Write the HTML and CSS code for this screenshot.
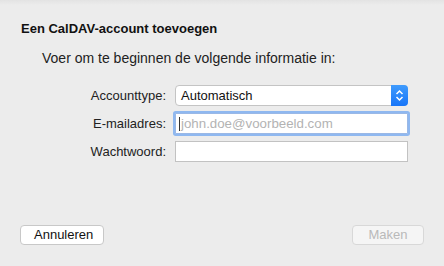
FILE: index.html
```html
<!DOCTYPE html>
<html>
<head>
<meta charset="utf-8">
<link rel="stylesheet" href="styles.css">
</head>
<body>
<div class="sheet">
  <div class="title">Een CalDAV-account toevoegen</div>
  <div class="intro">Voer om te beginnen de volgende informatie in:</div>
  <div class="form">
    <div class="label">Accounttype:</div>
    <div class="select">
      <span class="select-text">Automatisch</span>
      <span class="stepper">
        <svg width="9" height="13" viewBox="0 0 9 13"><path d="M1.5 5 L4.5 2 L7.5 5 M1.5 8 L4.5 11 L7.5 8" fill="none" stroke="#fff" stroke-width="1.5"/></svg>
      </span>
    </div>
    <div class="label">E-mailadres:</div>
    <div class="input focus"><span class="caret"></span><span class="placeholder">john.doe@voorbeeld.com</span></div>
    <div class="label">Wachtwoord:</div>
    <div class="input"></div>
  </div>
  <div class="footer">
    <button class="btn">Annuleren</button>
    <button class="btn disabled">Maken</button>
  </div>
</div>
</body>
</html>
```
FILE: styles.css
```css
html, body {
  margin: 0;
  padding: 0;
}
body {
  width: 444px;
  height: 266px;
  background: linear-gradient(#e3e3e3 0px, #ececec 5px, #ececec 100%);
  font-family: "Liberation Sans", Arial, sans-serif;
  font-size: 13px;
  color: #1a1a1a;
  overflow: hidden;
}
.sheet {
  padding: 21px 20px 0 20px;
  display: flex;
  flex-direction: column;
  height: 245px;
  box-sizing: border-box;
}
.title {
  font-weight: bold;
  line-height: 16px;
  padding-left: 1px;
  color: #111;
}
.intro {
  margin-top: 13px;
  margin-left: 22px;
  font-size: 14px;
  line-height: 17px;
  color: #222;
}
.form {
  margin-top: 18px;
  display: grid;
  grid-template-columns: 146px 233px;
  column-gap: 9px;
  row-gap: 7px;
  align-items: center;
}
.label {
  text-align: right;
  line-height: 16px;
  color: #222;
}
.select {
  height: 21px;
  box-sizing: border-box;
  background: #fff;
  border: 1px solid #c4c4c4;
  border-radius: 4px;
  display: flex;
  align-items: center;
  position: relative;
}
.select-text {
  flex: 1;
  padding-left: 5px;
  color: #111;
}
.stepper {
  width: 17px;
  height: 21px;
  margin: -1px -1px -1px 0;
  border-radius: 0 4px 4px 0;
  background: linear-gradient(#3f9bfd, #1775f8);
  display: flex;
  align-items: center;
  justify-content: center;
}
.input {
  height: 21px;
  box-sizing: border-box;
  background: #fff;
  border: 1px solid #c2c2c2;
  display: flex;
  align-items: center;
}
.input.focus {
  box-shadow: 0 0 0 2px #8fb8f0;
  border-color: #9ab8e6;
  border-radius: 1px;
}
.caret {
  width: 1px;
  height: 14px;
  background: #333;
  margin-left: 3px;
}
.placeholder {
  color: #b3b3b3;
  margin-left: 1px;
  font-size: 13.3px;
}
.footer {
  margin-top: auto;
  display: flex;
  justify-content: space-between;
}
.btn {
  font-family: "Liberation Sans", Arial, sans-serif;
  font-size: 13px;
  height: 20px;
  padding: 0 13px;
  background: #fff;
  border: 1px solid #c8c8c8;
  border-radius: 4px;
  color: #111;
  line-height: 16px;
}
.btn:first-child {
  width: 84px;
}
.btn.disabled {
  width: 72px;
  color: #b9b9b9;
  background: #f5f5f5;
  border-color: #d8d8d8;
}
```
